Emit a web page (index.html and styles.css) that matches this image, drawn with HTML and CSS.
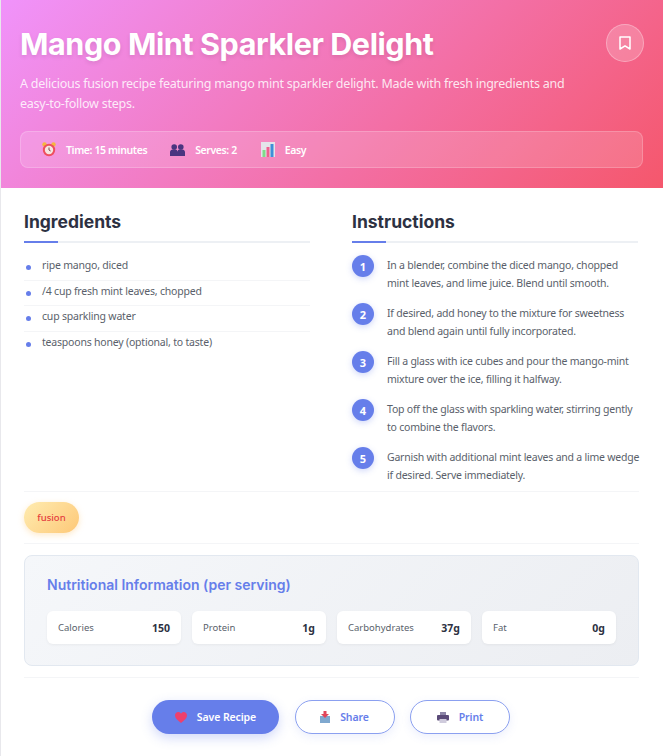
FILE: index.html
```html
<!DOCTYPE html>
<html>
<head>
  <title>Mango Mint Sparkler Delight</title>
  <link rel="stylesheet" href="styles.css">
</head>
<body>
  <div class="card">
    <header class="hero">
      <div class="hero-top">
        <h1>Mango Mint Sparkler Delight</h1>
        <button class="bookmark">
          <svg width="12" height="14" viewBox="0 0 12 14"><path d="M1 1h10v12L6 9.800 1 13z" fill="none" stroke="#fff" stroke-width="1.500" stroke-linejoin="round"/></svg>
        </button>
      </div>
      <p class="desc">A delicious fusion recipe featuring mango mint sparkler delight. Made with fresh ingredients and easy-to-follow steps.</p>
      <div class="meta">
        <span class="meta-item">
          <svg width="14" height="15" viewBox="0 0 14 15"><circle cx="2.500" cy="2.500" r="2.200" fill="#f5b73d"/><circle cx="11.500" cy="2.500" r="2.200" fill="#f5b73d"/><circle cx="7" cy="8" r="6.200" fill="#ee4f5e"/><circle cx="7" cy="8" r="4.200" fill="#f5e6e0"/><path d="M7 5.500V8l1.600 1" stroke="#7a4a50" stroke-width="1" fill="none"/></svg>
          Time: 15 minutes
        </span>
        <span class="meta-item">
          <svg width="15" height="12" viewBox="0 0 15 12"><circle cx="4.200" cy="3" r="2.800" fill="#4a3580"/><circle cx="10.800" cy="3" r="2.800" fill="#4a3580"/><path d="M0 12V8c0-1.700 1.500-2.800 4.200-2.800S7.500 6.300 7.500 8c0-1.700.6-2.800 3.300-2.800S15 6.300 15 8v4z" fill="#4a3580"/></svg>
          Serves: 2
        </span>
        <span class="meta-item meta-last">
          <svg width="14" height="15" viewBox="0 0 14 15"><rect width="14" height="15" fill="#e4e4ea"/><rect x="1.500" y="8" width="3" height="7" fill="#7fdc8a"/><rect x="5.500" y="5" width="3" height="10" fill="#ef5f8f"/><rect x="9.500" y="2" width="3" height="13" fill="#3f8fd8"/></svg>
          Easy
        </span>
      </div>
    </header>

    <main class="content">
      <div class="columns">
        <section>
          <h2 class="section-title">Ingredients</h2>
          <ul class="ingredients">
            <li>ripe mango, diced</li>
            <li>/4 cup fresh mint leaves, chopped</li>
            <li>cup sparkling water</li>
            <li>teaspoons honey (optional, to taste)</li>
          </ul>
        </section>
        <section>
          <h2 class="section-title">Instructions</h2>
          <ol class="steps">
            <li><span class="num">1</span><p>In a blender, combine the diced mango, chopped mint leaves, and lime juice. Blend until smooth.</p></li>
            <li><span class="num">2</span><p>If desired, add honey to the mixture for sweetness and blend again until fully incorporated.</p></li>
            <li><span class="num">3</span><p>Fill a glass with ice cubes and pour the mango-mint mixture over the ice, filling it halfway.</p></li>
            <li><span class="num">4</span><p>Top off the glass with sparkling water, stirring gently to combine the flavors.</p></li>
            <li><span class="num">5</span><p>Garnish with additional mint leaves and a lime wedge if desired. Serve immediately.</p></li>
          </ol>
        </section>
      </div>

      <div class="tags">
        <span class="tag">fusion</span>
      </div>

      <div class="nutrition">
        <h3>Nutritional Information (per serving)</h3>
        <div class="nutrition-grid">
          <div class="fact"><span>Calories</span><b>150</b></div>
          <div class="fact"><span>Protein</span><b>1g</b></div>
          <div class="fact"><span>Carbohydrates</span><b>37g</b></div>
          <div class="fact"><span>Fat</span><b>0g</b></div>
        </div>
      </div>

      <div class="actions">
        <button class="btn btn-primary">
          <svg width="12" height="11" viewBox="0 0 12 11"><path d="M6 11C2 8 0 6 0 3.300 0 1.300 1.500 0 3.200 0 4.300 0 5.400.6 6 1.700 6.600.6 7.700 0 8.800 0 10.500 0 12 1.300 12 3.300 12 6 10 8 6 11z" fill="#ee3f6d"/></svg>
          Save Recipe
        </button>
        <button class="btn btn-outline">
          <svg width="10" height="12" viewBox="0 0 10 12"><rect y="5" width="10" height="7" fill="#7fa8cf"/><path d="M3.500 0h3v3H9L5 7 1 3h2.500z" fill="#e0455a"/></svg>
          Share
        </button>
        <button class="btn btn-outline">
          <svg width="12" height="11" viewBox="0 0 12 11"><rect x="3" width="6" height="3" fill="#8d86a8"/><rect y="3" width="12" height="5.500" rx="1" fill="#5a4a78"/><rect x="2.500" y="7" width="7" height="4" fill="#cfcbdc"/></svg>
          Print
        </button>
      </div>
    </main>
  </div>
</body>
</html>
```

FILE: styles.css
```css
* {
  box-sizing: border-box;
}

body {
  margin: 0;
  font-family: "Noto Sans", sans-serif;
  background-color: #fff;
  color: #2d3748;
}

.card {
  width: 663px;
  height: 756px;
  overflow: hidden;
  border-left: 1px solid #e8e8ec;
}

.hero {
  height: 188px;
  padding: 24px 20px 0 19px;
  background: linear-gradient(135deg, #f093fb 0%, #f5576c 100%);
  color: #fff;
}

.hero-top {
  display: flex;
  justify-content: space-between;
  align-items: flex-start;
}

.hero h1 {
  margin: 0;
  font-family: Inter, sans-serif;
  font-size: 30.5px;
  line-height: 40px;
  font-weight: 700;
  letter-spacing: -0.4px;
  text-shadow: 0 2px 4px rgba(0, 0, 0, 0.1);
}

.bookmark {
  display: flex;
  align-items: center;
  justify-content: center;
  width: 38px;
  height: 38px;
  margin-right: -1px;
  padding: 0;
  border: 1px solid rgba(255, 255, 255, 0.3);
  border-radius: 50%;
  background: rgba(255, 255, 255, 0.2);
}

.desc {
  margin: 10px 0 17px;
  width: 565px;
  font-size: 12.5px;
  line-height: 20px;
  letter-spacing: -0.24px;
  color: rgba(255, 255, 255, 0.85);
}

.meta {
  display: flex;
  align-items: center;
  gap: 23px;
  height: 37px;
  padding: 0 18px 0 21px;
  border: 1px solid rgba(255, 255, 255, 0.2);
  border-radius: 8px;
  background: rgba(255, 255, 255, 0.15);
}

.meta-item {
  display: flex;
  align-items: center;
  gap: 10px;
  font-size: 10.5px;
  font-weight: 600;
  letter-spacing: -0.4px;
}

.meta-last {
  margin-left: 1px;
}

.content {
  padding: 0 24px 0 23px;
}

.columns {
  display: grid;
  grid-template-columns: 286px 286px;
  gap: 42px;
  padding-top: 22px;
  border-bottom: 1px solid #f4f5f7;
}

.section-title {
  position: relative;
  margin: 0 0 12px;
  height: 33px;
  font-family: Inter, sans-serif;
  font-size: 17.5px;
  line-height: 24px;
  font-weight: 700;
  color: #2d3142;
  border-bottom: 2px solid #edf0f4;
}

.section-title::after {
  content: "";
  position: absolute;
  left: 0;
  bottom: -2px;
  width: 34px;
  height: 2px;
  background: #667eea;
}

.ingredients {
  list-style: none;
  margin: 0;
  padding: 0;
}

.ingredients li {
  position: relative;
  padding: 2px 0 5.6px 18px;
  font-size: 10.5px;
  line-height: 17px;
  letter-spacing: -0.2px;
  color: #5a5f6b;
  border-bottom: 1px solid #f4f5f7;
}

.ingredients li:last-child {
  border-bottom: none;
}

.ingredients li::before {
  content: "";
  position: absolute;
  left: 2px;
  top: 10px;
  width: 5px;
  height: 5px;
  border-radius: 50%;
  background: #667eea;
}

.steps {
  list-style: none;
  margin: 0;
  padding: 0;
}

.steps li {
  display: flex;
  gap: 13px;
  height: 48px;
}

.steps li:last-child {
  height: 44px;
}

.num {
  flex: none;
  display: flex;
  align-items: center;
  justify-content: center;
  width: 22px;
  height: 22px;
  border-radius: 50%;
  background: #667eea;
  color: #fff;
  font-size: 11px;
  font-weight: 700;
  box-shadow: 0 2px 6px rgba(102, 126, 234, 0.3);
}

.steps p {
  margin: 1px -4px 0 0;
  font-size: 10.5px;
  line-height: 18px;
  letter-spacing: -0.22px;
  color: #5a5f6b;
}

.tags {
  padding: 10px 0;
  border-bottom: 1px solid #f4f5f7;
}

.tag {
  display: block;
  width: 55px;
  height: 31px;
  border-radius: 16px;
  background: linear-gradient(135deg, #ffecb0, #fdc878);
  color: #e53e3e;
  font-size: 9.5px;
  font-weight: 500;
  line-height: 31px;
  text-align: center;
  box-shadow: 0 2px 6px rgba(253, 200, 120, 0.4);
}

.nutrition {
  margin-top: 11px;
  height: 111px;
  padding: 18px 22px 0;
  border: 1px solid #e2e8f0;
  border-radius: 8px;
  background: linear-gradient(135deg, #f5f7fa, #eceef2);
}

.nutrition h3 {
  margin: 0 0 15px;
  font-family: Inter, sans-serif;
  font-size: 14px;
  line-height: 22px;
  font-weight: 600;
  color: #667eea;
}

.nutrition-grid {
  display: grid;
  grid-template-columns: repeat(4, 134px);
  gap: 11px;
}

.fact {
  display: flex;
  justify-content: space-between;
  align-items: center;
  height: 33px;
  padding: 0 11px;
  border-radius: 6px;
  background: #fff;
  box-shadow: 0 1px 3px rgba(0, 0, 0, 0.05);
  font-size: 9.5px;
  color: #5a5f6b;
}

.fact b {
  font-size: 10.5px;
  color: #2d3142;
}

.actions {
  display: flex;
  justify-content: center;
  gap: 15.5px;
  margin-top: 11px;
  padding-top: 22px;
  padding-right: 1px;
  border-top: 1px solid #f4f5f7;
}

.btn {
  display: flex;
  align-items: center;
  justify-content: center;
  gap: 10px;
  height: 34px;
  border-radius: 17px;
  font-family: "Noto Sans", sans-serif;
  font-size: 10.5px;
  font-weight: 600;
  letter-spacing: -0.1px;
  padding: 0;
}

.btn-primary {
  width: 127px;
  border: none;
  background: #667eea;
  color: #fff;
  box-shadow: 0 4px 12px rgba(102, 126, 234, 0.3);
}

.btn-outline {
  width: 100px;
  border: 1.5px solid #8ba0f0;
  background: #fff;
  color: #667eea;
  box-shadow: 0 3px 10px rgba(102, 126, 234, 0.12);
}
```
